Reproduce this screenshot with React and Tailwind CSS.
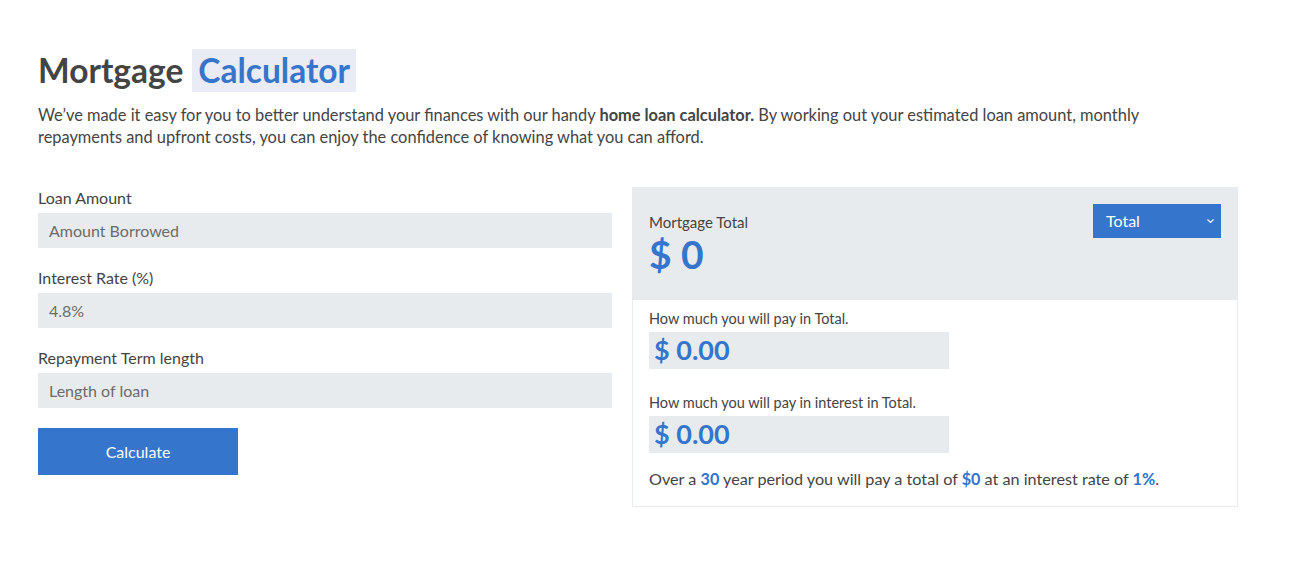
export default function App() {
  return (
    <div className="w-[1307px] min-h-[581px] bg-white text-[#444] font-['Lato','Noto_Sans',sans-serif]">
      <div className="pl-[38px] pr-[69px] pt-[49px]">
        <h1 className="flex items-center text-[33.5px] font-bold leading-[43px] text-[#444]">
          <span>Mortgage</span>
          <span className="ml-[9px] px-[6px] bg-[#e9ebf5] text-[#3575cc]">Calculator</span>
        </h1>
        <p className="mt-[12px] text-[16.4px] leading-[22px] text-[#444] w-[1130px]">
          We’ve made it easy for you to better understand your finances with our handy <b>home loan calculator.</b> By working out your estimated loan amount, monthly repayments and upfront costs, you can enjoy the confidence of knowing what you can afford.
        </p>
        <div className="mt-[40px] flex gap-[20px]">
          <div className="w-[574px] flex flex-col">
            <label className="text-[16px] leading-[20px] text-[#444] h-[25px]">Loan Amount</label>
            <div className="h-[35px] bg-[#e8ebee] flex items-center px-[11px] text-[16px] text-[#6b6b6b]">Amount Borrowed</div>
            <label className="mt-[20px] text-[16px] leading-[20px] text-[#444] h-[25px]">Interest Rate (%)</label>
            <div className="h-[35px] bg-[#e8ebee] flex items-center px-[11px] text-[16px] text-[#6b6b6b]">4.8%</div>
            <label className="mt-[20px] text-[16px] leading-[20px] text-[#444] h-[25px]">Repayment Term length</label>
            <div className="h-[35px] bg-[#e8ebee] flex items-center px-[11px] text-[16px] text-[#6b6b6b]">Length of loan</div>
            <button className="mt-[20px] w-[200px] h-[47px] bg-[#3575cc] text-white text-[16px]">Calculate</button>
          </div>
          <div className="w-[606px] -mt-[1px] border border-[#e8ebee] h-[320px] flex flex-col">
            <div className="bg-[#e8ebee] h-[112px] flex justify-between px-[16px] pt-[16px]">
              <div className="pt-[9px]">
                <div className="text-[15px] leading-[18px] text-[#444]">Mortgage Total</div>
                <div className="text-[39px] font-bold leading-[44px] text-[#3575cc] mt-[1px]">$ 0</div>
              </div>
              <div className="w-[128px] h-[34px] bg-[#3575cc] text-white flex items-center justify-between pl-[13px] pr-[6px] text-[16px]">
                <span>Total</span>
                <svg width="9" height="6" viewBox="0 0 9 6" fill="none" stroke="white" strokeWidth="1.2"><path d="M1.5 1.5 L4.5 4.5 L7.5 1.5" /></svg>
              </div>
            </div>
            <div className="px-[16px] pt-[9px]">
              <div className="text-[14.5px] leading-[20px] text-[#444]">How much you will pay in Total.</div>
              <div className="mt-[3px] w-[300px] h-[37px] bg-[#e8ebee] flex items-center px-[5px] text-[27px] font-bold text-[#3575cc]">$ 0.00</div>
              <div className="mt-[24px] text-[14.5px] leading-[20px] text-[#444]">How much you will pay in interest in Total.</div>
              <div className="mt-[3px] w-[300px] h-[37px] bg-[#e8ebee] flex items-center px-[5px] text-[27px] font-bold text-[#3575cc]">$ 0.00</div>
              <div className="mt-[15px] text-[16.2px] leading-[22px] text-[#444]">
                Over a <b className="text-[#3575cc]">30</b> year period you will pay a total of <b className="text-[#3575cc]">$0</b> at an interest rate of <b className="text-[#3575cc]">1%</b>.
              </div>
            </div>
          </div>
        </div>
      </div>
    </div>
  );
}
